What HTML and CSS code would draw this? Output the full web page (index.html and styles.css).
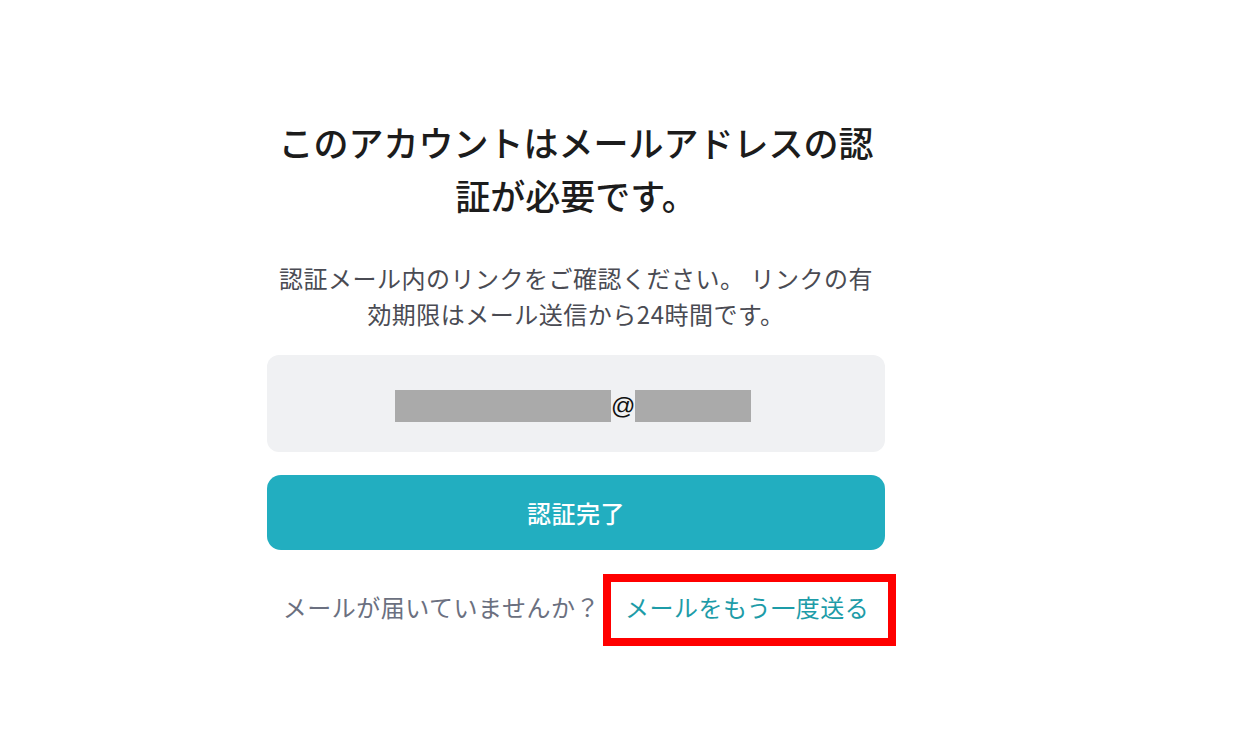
FILE: index.html
```html
<!DOCTYPE html>
<html lang="ja">
<head>
<meta charset="utf-8">
<title>メールアドレスの認証</title>
<link rel="stylesheet" href="styles.css">
</head>
<body>
<main class="page">
  <section class="card">
    <h1 class="title">このアカウントはメールアドレスの認証が必要です。</h1>
    <p class="lead">認証メール内のリンクをご確認ください。 リンクの有効期限はメール送信から24時間です。</p>
    <div class="email-box">
      <span class="mask mask-user"></span><span class="at">@</span><span class="mask mask-domain"></span>
    </div>
    <button class="primary" type="button">認証完了</button>
    <div class="resend">
      <span class="resend-q">メールが届いていませんか？</span>
      <a class="resend-link" href="#">メールをもう一度送る<span class="highlight"></span></a>
    </div>
  </section>
</main>
</body>
</html>
```

FILE: styles.css
```css
* { box-sizing: border-box; }

html, body {
  margin: 0;
  padding: 0;
  min-height: 100%;
  background: #ffffff;
}

body {
  font-family: "Noto Sans CJK JP", "Noto Sans", sans-serif;
  color: #1f1f1f;
}

.page {
  min-height: 735px;
  padding: 116px 0 80px 267px;
}

.card {
  width: 618px;
  display: flex;
  flex-direction: column;
  align-items: center;
}

.title {
  width: 600px;
  margin: 0;
  font-size: 35px;
  line-height: 52.5px;
  font-weight: 500;
  text-align: center;
  color: #1c1c1c;
}

.lead {
  width: 600px;
  margin: 39px 0 0;
  font-size: 24px;
  line-height: 36px;
  letter-spacing: 0.5px;
  text-align: center;
  color: #4a4b53;
}

.email-box {
  width: 618px;
  height: 97px;
  margin-top: 23px;
  border-radius: 12px;
  background: #f0f1f3;
  display: flex;
  align-items: center;
  justify-content: center;
  padding: 4px 6px 0 0;
}

.mask {
  display: block;
  height: 32px;
  background: #aaaaaa;
}

.mask-user { width: 216px; }
.mask-domain { width: 116px; }

.at {
  width: 24px;
  font-family: "Liberation Sans", Arial, sans-serif;
  font-size: 24px;
  line-height: 32px;
  color: #111111;
  text-align: center;
}

.primary {
  width: 618px;
  height: 75px;
  margin-top: 23px;
  border: none;
  border-radius: 14px;
  background: #22aec0;
  color: #ffffff;
  font-family: "Noto Sans CJK JP", "Noto Sans", sans-serif;
  font-size: 24px;
  font-weight: 500;
  letter-spacing: 0.5px;
  cursor: pointer;
}

.resend {
  margin-top: 39px;
  display: flex;
  justify-content: center;
  gap: 25px;
  font-size: 24px;
  line-height: 36px;
  letter-spacing: 0.5px;
}

.resend-q {
  color: #6b7080;
}

.resend-link {
  position: relative;
  display: block;
  color: #1d9ca8;
  text-decoration: none;
}

.highlight {
  position: absolute;
  left: -22px;
  right: -27px;
  top: -15px;
  bottom: -21px;
  border: 8px solid #ff0000;
  pointer-events: none;
}
```
